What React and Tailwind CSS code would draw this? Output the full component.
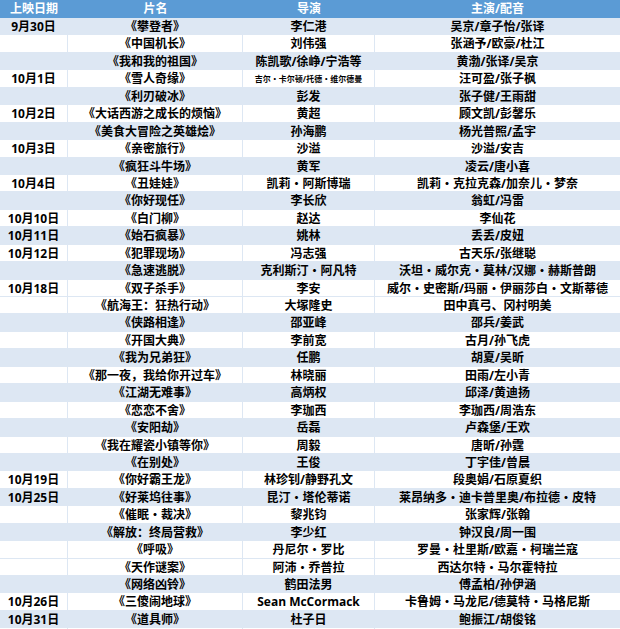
import React from "react";

const rows = [
  ["9月30日", "《攀登者》", "李仁港", "吴京/章子怡/张译", 1],
  ["", "《中国机长》", "刘伟强", "张涵予/欧豪/杜江", 0],
  ["", "《我和我的祖国》", "陈凯歌/徐峥/宁浩等", "黄渤/张译/吴京", 1],
  ["10月1日", "《雪人奇缘》", "吉尔·卡尔顿/托德·维尔德曼", "汪可盈/张子枫", 0, true],
  ["", "《利刃破冰》", "彭发", "张子健/王雨甜", 1],
  ["10月2日", "《大话西游之成长的烦恼》", "黄超", "顾文凯/彭馨乐", 0],
  ["", "《美食大冒险之英雄烩》", "孙海鹏", "杨光普照/孟宇", 1],
  ["10月3日", "《亲密旅行》", "沙溢", "沙溢/安吉", 0],
  ["", "《疯狂斗牛场》", "黄军", "凌云/唐小喜", 1],
  ["10月4日", "《丑娃娃》", "凯莉·阿斯博瑞", "凯莉·克拉克森/加奈儿·梦奈", 0],
  ["", "《你好现任》", "李长欣", "翁虹/冯雷", 1],
  ["10月10日", "《白门柳》", "赵达", "李仙花", 0],
  ["10月11日", "《始石疯暴》", "姚林", "丢丢/皮妞", 1],
  ["10月12日", "《犯罪现场》", "冯志强", "古天乐/张继聪", 0],
  ["", "《急速逃脱》", "克利斯汀·阿凡特", "沃坦·威尔克·莫林/汉娜·赫斯普朗", 1],
  ["10月18日", "《双子杀手》", "李安", "威尔·史密斯/玛丽·伊丽莎白·文斯蒂德", 0],
  ["", "《航海王：狂热行动》", "大塚隆史", "田中真弓、冈村明美", 0],
  ["", "《侠路相逢》", "邵亚峰", "邵兵/姜武", 1],
  ["", "《开国大典》", "李前宽", "古月/孙飞虎", 0],
  ["", "《我为兄弟狂》", "任鹏", "胡夏/吴昕", 1],
  ["", "《那一夜，我给你开过车》", "林晓丽", "田雨/左小青", 0],
  ["", "《江湖无难事》", "高炳权", "邱泽/黄迪扬", 1],
  ["", "《恋恋不舍》", "李珈西", "李珈西/周浩东", 0],
  ["", "《安阳劫》", "岳磊", "卢森堡/王欢", 1],
  ["", "《我在耀瓷小镇等你》", "周毅", "唐昕/孙霆", 0],
  ["", "《在别处》", "王俊", "丁宇佳/曾晨", 1],
  ["10月19日", "《你好霸王龙》", "林珍钊/静野孔文", "段奥娟/石原夏织", 0],
  ["10月25日", "《好莱坞往事》", "昆汀·塔伦蒂诺", "莱昂纳多·迪卡普里奥/布拉德·皮特", 1],
  ["", "《催眠·裁决》", "黎兆钧", "张家辉/张翰", 0],
  ["", "《解放：终局营救》", "李少红", "钟汉良/周一围", 1],
  ["", "《呼吸》", "丹尼尔·罗比", "罗曼·杜里斯/欧嘉·柯瑞兰寇", 0],
  ["", "《天作谜案》", "阿沛·乔普拉", "西达尔特·马尔霍特拉", 0],
  ["", "《网络凶铃》", "鹤田法男", "傅孟柏/孙伊涵", 1],
  ["10月26日", "《三傻闹地球》", "Sean McCormack", "卡鲁姆·马龙尼/德莫特·马格尼斯", 0],
  ["10月31日", "《道具师》", "杜子日", "鲍振江/胡俊铭", 1],
];

function T({ s }) {
  const parts = s.split("·");
  return (
    <>
      {parts.map((p, i) => (
        <React.Fragment key={i}>
          {i > 0 && <span className="font-['Noto_Sans_CJK_SC',sans-serif]">·</span>}
          {p}
        </React.Fragment>
      ))}
    </>
  );
}

export default function App() {
  return (
    <div className="w-[620px] h-[629px] bg-white font-['Open_Sans','Noto_Sans_CJK_SC',sans-serif] font-bold text-[12px] text-black overflow-hidden">
      <div className="grid grid-cols-[68px_175px_132px_245px] h-[18px] bg-[#5b9bd5] text-white leading-[18px] text-center">
        <div>上映日期</div>
        <div>片名</div>
        <div>导演</div>
        <div>主演/配音</div>
      </div>
      {rows.map(([d, t, dir, cast, blue, small], i) => (
        <div
          key={i}
          className={
            "grid grid-cols-[68px_175px_132px_245px] h-[17.45px] text-center border-b border-[#dde7f3] " +
            (blue ? "bg-[#dde7f3]" : "bg-white")
          }
        >
          <div className="flex items-center justify-center border-r border-[#dde7f3] whitespace-nowrap">{d}</div>
          <div className="flex items-center justify-center border-r border-[#dde7f3] whitespace-nowrap"><T s={t} /></div>
          <div className={"flex items-center justify-center border-r border-[#dde7f3] whitespace-nowrap " + (small ? "text-[8px]" : "")}><T s={dir} /></div>
          <div className="flex items-center justify-center whitespace-nowrap"><T s={cast} /></div>
        </div>
      ))}
    </div>
  );
}
